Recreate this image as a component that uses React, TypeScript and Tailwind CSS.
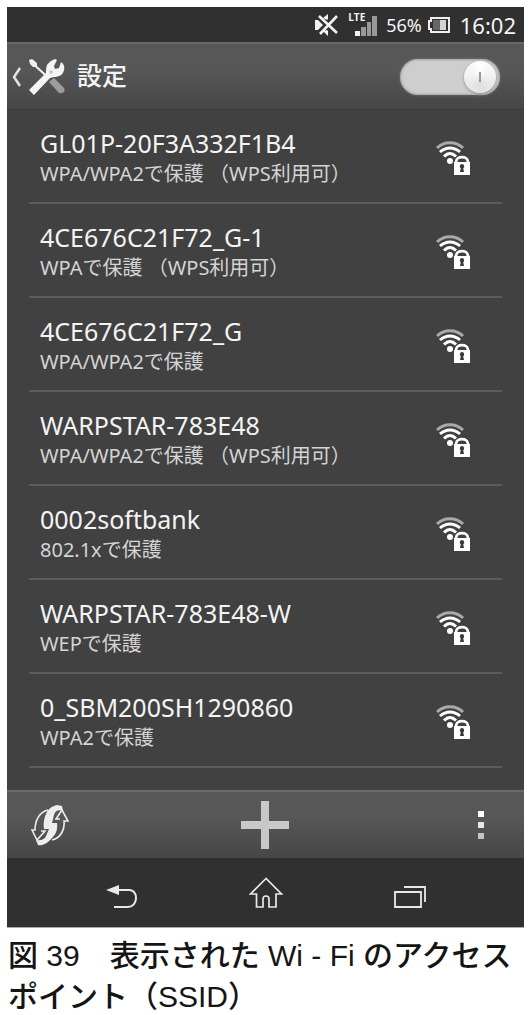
import React, { useState } from "react";

type Network = { ssid: string; security: string };

const networks: Network[] = [
  { ssid: "GL01P-20F3A332F1B4", security: "WPA/WPA2で保護 （WPS利用可）" },
  { ssid: "4CE676C21F72_G-1", security: "WPAで保護 （WPS利用可）" },
  { ssid: "4CE676C21F72_G", security: "WPA/WPA2で保護" },
  { ssid: "WARPSTAR-783E48", security: "WPA/WPA2で保護 （WPS利用可）" },
  { ssid: "0002softbank", security: "802.1xで保護" },
  { ssid: "WARPSTAR-783E48-W", security: "WEPで保護" },
  { ssid: "0_SBM200SH1290860", security: "WPA2で保護" },
];

function MuteIcon() {
  return (
    <svg width="24" height="24" viewBox="0 0 24 24" aria-hidden="true">
      <path d="M1 7h3l5 5-5 5H1z" fill="#f2f2f2" />
      <path d="M9 5l5-4v5l-1 1zM9 18l5 5v-5l-1-1z" fill="#f2f2f2" />
      <path d="M5 3l18 17M23 3L6 21" stroke="#f2f2f2" strokeWidth="2.6" />
    </svg>
  );
}

function SignalIcon() {
  return (
    <svg width="28" height="24" viewBox="0 0 28 24" aria-hidden="true">
      <path d="M5 18h5v5H5z" fill="#f2f2f2" />
      <path d="M11 14h5v9h-5zM17 9h4v14h-4zM22 3h5v20h-5z" fill="#999" />
    </svg>
  );
}

function BatteryIcon() {
  return (
    <svg width="22" height="16" viewBox="0 0 22 16" aria-hidden="true">
      <path d="M3 1h18v14H3v-3H1V4h2z" fill="none" stroke="#eee" strokeWidth="2" />
      <path d="M5 3h7v10H5z" fill="#666" />
      <path d="M12 3h6v10h-6z" fill="#d4d4d4" />
    </svg>
  );
}

function ToolsIcon() {
  return (
    <svg width="36" height="36" viewBox="0 0 36 36" aria-hidden="true">
      <path d="M0 1L3 0l5 4v3l10 9-1 2L6 8H4L1 5z" fill="#f0f0f0" />
      <path d="M20 23l5-4 10 10c2 3-1 6-5 5z" fill="#9c9c9c" />
      <path d="M0 31L17 14c0-3 0-5 1-8 2-3 5-5 8-6l2 1-3 6 1 3 4-1 2-6c3 2 4 5 3 8-1 5-5 7-10 7l-4 1L5 36z" fill="#f4f4f4" />
      <circle cx="22" cy="13" r="1.800" fill="#c4c4c4" />
    </svg>
  );
}

function SecureWifiIcon() {
  return (
    <svg width="36" height="36" viewBox="0 0 36 36" aria-hidden="true">
      <path d="M1 8C8 1 20 1 27 8" fill="none" stroke="#aaa" strokeWidth="3" />
      <path d="M4 12C10 6.500 18 6.500 24 12M8 16.500C12 12.500 16 12.500 20 16.500" fill="none" stroke="#fff" strokeWidth="3" />
      <circle cx="14" cy="21" r="3" fill="#fff" />
      <path d="M18 23v-1c0-9 16-9 16 0v1z" fill="#404040" />
      <path d="M20 23v-1c0-6.500 12-6.500 12 0v1" fill="none" stroke="#fff" strokeWidth="2.800" />
      <path d="M18 22h16v13H18z" fill="#fff" />
      <path d="M26 24a2.300 2.300 0 0 0-1.200 4.200L24 32h4l-.8-3.800A2.300 2.300 0 0 0 26 24z" fill="#383838" />
    </svg>
  );
}

function WpsIcon() {
  return (
    <svg width="38" height="42" viewBox="0 0 38 42" aria-hidden="true">
      <path d="M17 6C8 8 4 17 4 26H1l5 10 8-9h-4" fill="none" stroke="#eee" strokeWidth="1.600" />
      <path d="M21 36c9-2 13-11 12-19h4L31 6l-6 9h4" fill="none" stroke="#eee" strokeWidth="1.600" />
      <path d="M15 10C17 5 21 2 26 1l5 1 1 5c-5-2-8 0-9 4l-2 8h5c1 8-2 12-5 15-5 6-10 8-14 7l-2-5c5 1 9-1 10-4l3-7h-5c-1-5 0-11 2-15z" fill="#ededed" />
    </svg>
  );
}

function BackIcon() {
  return (
    <svg width="34" height="26" viewBox="0 0 34 26" aria-hidden="true">
      <path d="M12 7h12c10 0 9 17-1 17H9" fill="none" stroke="#e8e8e8" strokeWidth="2" />
      <path d="M1 7l13-5v10z" fill="#e8e8e8" />
    </svg>
  );
}

function HomeIcon() {
  return (
    <svg width="34" height="32" viewBox="0 0 34 32" aria-hidden="true">
      <path d="M17 1.500L1.500 17H7.500v13H14v-8c0-4 6-4 6 0v8h7V17h5.500z" fill="none" stroke="#e8e8e8" strokeWidth="1.700" />
    </svg>
  );
}

function RecentIcon() {
  return (
    <svg width="34" height="24" viewBox="0 0 34 24" aria-hidden="true">
      <path d="M2 7h26v15H2zM11 2h21v15" fill="none" stroke="#e8e8e8" strokeWidth="1.800" />
    </svg>
  );
}

export default function App() {
  const [enabled, setEnabled] = useState(true);
  return (
    <div className="bg-white pt-[7px] font-['Noto_Sans','Noto_Sans_CJK_JP',sans-serif]">
      <main className="mr-[5px] ml-[7px] bg-[#414141] text-[#f4f4f4]">
        <div className="flex h-[35px] items-center justify-end bg-[#303030] pr-2">
          <MuteIcon />
          <div className="relative ml-3">
            <SignalIcon />
            <span className="absolute -top-1 -left-0.5 font-['Open_Sans',sans-serif] text-[10px] leading-4 font-bold">LTE</span>
          </div>
          <span className="ml-2 text-[18px] leading-6">56%</span>
          <span className="ml-1.5"><BatteryIcon /></span>
          <span className="ml-2.5 text-[22px] leading-6">16:02</span>
        </div>

        <header className="flex h-[67px] items-center border-t-2 border-[#686868] bg-linear-to-b from-[#575757] from-40% to-[#464646] pr-6 pl-1">
          <button className="flex items-center" aria-label="戻る">
            <svg width="12" height="20" viewBox="0 0 12 20" aria-hidden="true">
              <path d="M9 1L3 10l6 9" fill="none" stroke="#e4e4e4" strokeWidth="2.500" />
            </svg>
            <span className="pl-1.5"><ToolsIcon /></span>
          </button>
          <h1 className="ml-3 pb-1 text-[25px] leading-8 font-medium">設定</h1>
          <label className="relative ml-auto flex h-9 w-[100px] items-center rounded-full bg-[#cecece] shadow-[inset_0_0_3px_#777,0_0_3px_#777]">
            <input
              type="checkbox"
              role="switch"
              aria-label="Wi-Fi"
              checked={enabled}
              onChange={() => setEnabled(!enabled)}
              className="peer absolute inset-0 cursor-pointer opacity-0"
            />
            <span className="ml-1 flex size-8 items-center justify-center rounded-full bg-conic from-[#fff] via-[#e0e0e0] to-[#fff] shadow-[0_1px_3px_#888] peer-checked:mr-1 peer-checked:ml-auto">
              <span className="h-2.5 w-0.5 bg-[#999]" />
            </span>
          </label>
        </header>

        <ul className="border-t border-[#383838] px-[22px] pb-[22px]">
          {networks.map((network) => (
            <li key={network.ssid} className="h-[94px] border-b-2 border-[#5c5c5c]">
              <button className="flex h-full w-full items-center justify-between pt-1 pr-[30px] pl-[11px] text-left">
                <span>
                  <span className="block text-[25px] leading-8 whitespace-nowrap">{network.ssid}</span>
                  <span className="block text-[20px] leading-[30px] whitespace-nowrap text-[#d4d4d4]">{network.security}</span>
                </span>
                <SecureWifiIcon />
              </button>
            </li>
          ))}
        </ul>

        <div className="grid h-[68px] grid-cols-3 items-center border-t-2 border-[#6a6a6a] bg-linear-to-b from-[#575757] from-40% to-[#464646] px-6">
          <button className="justify-self-start" aria-label="WPS"><WpsIcon /></button>
          <button className="justify-self-center" aria-label="ネットワークを追加">
            <svg width="48" height="48" viewBox="0 0 48 48" aria-hidden="true">
              <path d="M20 0h8v20h20v8H28v20h-8V28H0v-8h20z" fill="#c8c8c8" />
            </svg>
          </button>
          <button className="mr-4 flex flex-col gap-[5px] justify-self-end" aria-label="メニュー">
            <span className="size-1.5 bg-white" />
            <span className="size-1.5 bg-[#e8e8e8]" />
            <span className="size-1.5 bg-[#c4c4c4]" />
          </button>
        </div>

        <nav className="flex h-[70px] items-end justify-center gap-[110px] border-b border-[#aaa] bg-[#303030] pb-[18px]">
          <button aria-label="戻る"><BackIcon /></button>
          <button aria-label="ホーム"><HomeIcon /></button>
          <button aria-label="最近使ったアプリ"><RecentIcon /></button>
        </nav>
      </main>
      <p className="mt-[7px] pl-2 font-['Liberation_Sans','Noto_Sans_CJK_JP',sans-serif] text-[30px] leading-[41px] font-medium whitespace-nowrap text-[#151515]">
        図 39　表示された Wi ‐ Fi のアクセス<br />ポイント（SSID）
      </p>
    </div>
  );
}
